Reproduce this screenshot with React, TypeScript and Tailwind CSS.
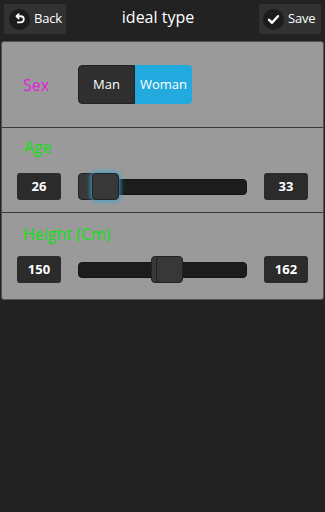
import React from "react";

const font = { fontFamily: '"Open Sans", "Noto Sans", sans-serif' };

function ValueBox({ value }: { value: string }) {
  return (
    <div className="w-[44px] h-[27px] shrink-0 rounded-[3px] bg-[#2b2b2b] flex items-center justify-center text-white text-[13px] font-bold">
      {value}
    </div>
  );
}

function RangeTrack({ thumbs, glow }: { thumbs: number[]; glow?: boolean }) {
  return (
    <div className="relative flex-1 h-[27px] flex items-center">
      <div className="w-full h-[16px] rounded-[4px] bg-[#1c1c1c] border border-[#141414]" />
      {thumbs.map((left, i) => (
        <div
          key={i}
          className={`absolute top-0 w-[27px] h-[27px] rounded-[4px] bg-[#383838] border border-[#222] ${
            glow && i === thumbs.length - 1 ? "shadow-[0_0_5px_1px_#35a6d6]" : ""
          }`}
          style={{ left }}
        />
      ))}
    </div>
  );
}

export default function App() {
  return (
    <div className="w-[325px] h-[512px] bg-[#222222] overflow-hidden" style={font}>
      {/* шапка */}
      <div className="h-[41px] flex items-start justify-between px-[4px] pt-[4px] relative">
        <div className="w-[62px] h-[30px] bg-[#323232] rounded-[2px] flex items-center pl-[5px] gap-[4px]">
          <div className="w-[21px] h-[21px] rounded-full bg-[#1c1c1c] flex items-center justify-center">
            <svg width="13" height="13" viewBox="0 0 16 16" fill="none" stroke="white" strokeWidth="2.2" strokeLinecap="round" strokeLinejoin="round">
              <path d="M5 4 H9.5 a3.8 3.8 0 0 1 0 7.6 H6" />
              <path d="M7 1.5 L4.3 4 L7 6.5" />
            </svg>
          </div>
          <span className="text-white text-[13px] font-medium tracking-[-0.2px]">Back</span>
        </div>
        <div className="absolute left-0 right-[9px] top-[5px] text-center text-white text-[16px] pointer-events-none">
          ideal type
        </div>
        <div className="w-[62px] h-[30px] bg-[#323232] rounded-[2px] flex items-center pl-[4px] gap-[4px]">
          <div className="w-[21px] h-[21px] rounded-full bg-[#1c1c1c] flex items-center justify-center">
            <svg width="13" height="13" viewBox="0 0 16 16" fill="none" stroke="white" strokeWidth="3" strokeLinecap="round" strokeLinejoin="round">
              <path d="M2.5 8.5 L6.2 12 L13.5 4" />
            </svg>
          </div>
          <span className="text-white text-[13px] font-medium tracking-[-0.2px]">Save</span>
        </div>
      </div>

      {/* панель */}
      <div className="mx-[1px] rounded-[3px] bg-[#9a9a9a] border border-[#555]">
        <div className="h-[86px] flex items-center pl-[21px] border-b border-[#3a3a3a]">
          <span className="w-[55px] text-[#e01ee0] text-[16px]">Sex</span>
          <div className="flex h-[39px] rounded-[4px] overflow-hidden">
            <div className="w-[57px] bg-[#2f2f2f] flex items-center justify-center text-white text-[13px] border border-[#222] rounded-l-[4px]">
              Man
            </div>
            <div className="w-[57px] bg-[#22aadf] flex items-center justify-center text-white text-[13px]">
              Woman
            </div>
          </div>
        </div>

        <div className="h-[85px] border-b border-[#3a3a3a] px-[15px] pt-[8px]">
          <div className="text-[#12e012] text-[16px] pl-[7px] leading-[22px]">Age</div>
          <div className="flex items-center gap-[17px] mt-[15px]">
            <ValueBox value="26" />
            <RangeTrack thumbs={[0, 14]} glow />
            <ValueBox value="33" />
          </div>
        </div>

        <div className="h-[86px] px-[15px] pt-[10px]">
          <div className="text-[#12e012] text-[16px] pl-[6px] leading-[22px]">Height (Cm)</div>
          <div className="flex items-center gap-[17px] mt-[11px]">
            <ValueBox value="150" />
            <RangeTrack thumbs={[73, 78]} />
            <ValueBox value="162" />
          </div>
        </div>
      </div>
    </div>
  );
}
